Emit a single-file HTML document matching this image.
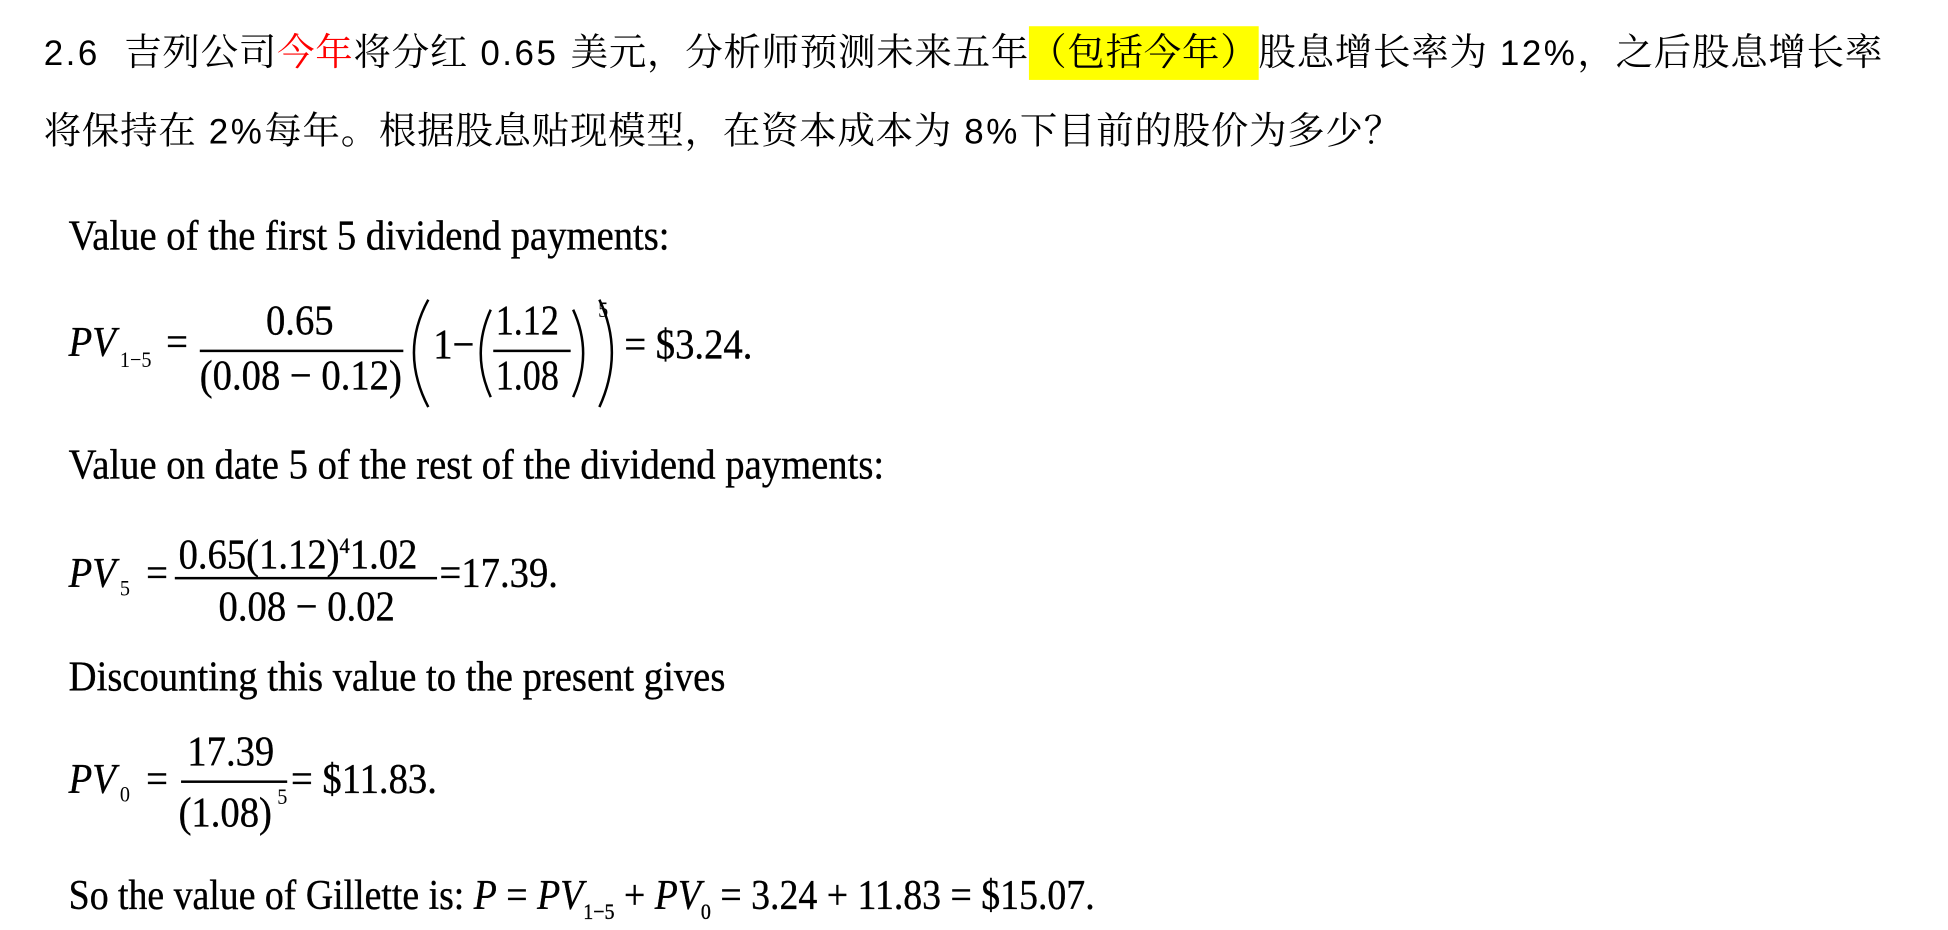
<!DOCTYPE html>
<html><head><meta charset="utf-8"><style>
html,body{margin:0;padding:0;background:#fff;}
body{width:1948px;height:928px;overflow:hidden;position:relative;}
#c{position:absolute;left:0;top:0;width:1560px;height:743px;transform:scale(1.2487);transform-origin:0 0;}
.cn{position:absolute;left:35px;font-family:"Liberation Sans","Noto Serif CJK SC",serif;font-size:30px;line-height:30px;white-space:nowrap;color:#000;letter-spacing:0.6px}
.cn b{font-weight:normal;letter-spacing:2px;font-size:28px}
.hl{background:#ffff00;padding:5px 0;}
.r{color:#f00}
.m{position:absolute;font-family:"Liberation Serif",serif;font-size:34px;line-height:30px;white-space:nowrap;transform-origin:0 50%;transform:scaleX(.91);color:#000;-webkit-text-stroke:0.3px #000}
.i{font-style:italic}
.s{position:absolute;font-family:"Liberation Serif",serif;font-size:18px;line-height:17px;white-space:nowrap;transform:scaleX(.9);transform-origin:0 50%}
.ln{position:absolute;height:1.8px;background:#000}
sub,sup{font-size:18px;}
</style></head><body><div id="c">
<div class="cn" style="top:28px"><b>2.6&nbsp;&nbsp;</b>吉列公司<span class="r">今年</span>将分红<b> 0.65 </b>美元，分析师预测未来五年<span class="hl">（包括今年）</span>股息增长率为<b> 12%</b>，之后股息增长率</div>
<div class="cn" style="top:91px">将保持在<b> 2%</b>每年。根据股息贴现模型，在资本成本为<b> 8%</b>下目前的股价为多少？</div>

<div class="m" style="left:55px;top:175px">Value of the first 5 dividend payments:</div>

<div class="m i" style="left:55px;top:260px">PV</div>
<div class="s" style="left:96px;top:280px">1−5</div>
<div class="m" style="left:133px;top:260px">=</div>
<div class="m" style="left:213px;top:243px">0.65</div>
<div class="ln" style="left:160px;top:280px;width:163px"></div>
<div class="m" style="left:160px;top:287px">(0.08 − 0.12)</div>
<div class="m" style="left:347px;top:262px">1−</div>
<div class="m" style="left:397px;top:243px;transform:scaleX(.85)">1.12</div>
<div class="ln" style="left:395px;top:280px;width:62px"></div>
<div class="m" style="left:397px;top:287px;transform:scaleX(.85)">1.08</div>
<div class="s" style="left:479px;top:240px">5</div>
<div class="m" style="left:500px;top:262px">= $3.24.</div>
<svg style="position:absolute;left:0;top:0" width="600" height="400" fill="none" stroke="#000" stroke-width="2">
<path d="M343 240 Q320 282 343 326"/><path d="M480 240 Q500 282 480 326"/>
<path d="M393 248 Q377 283 393 318"/><path d="M459 248 Q475 283 459 318"/>
</svg>

<div class="m" style="left:55px;top:358px">Value on date 5 of the rest of the dividend payments:</div>

<div class="m i" style="left:55px;top:445px">PV</div>
<div class="s" style="left:96px;top:463px">5</div>
<div class="m" style="left:117px;top:445px">=</div>
<div class="m" style="left:143px;top:422px">0.65(1.12)<sup>4</sup>1.02</div>
<div class="ln" style="left:140px;top:462px;width:210px"></div>
<div class="m" style="left:175px;top:472px">0.08 − 0.02</div>
<div class="m" style="left:352px;top:445px">=17.39.</div>

<div class="m" style="left:55px;top:528px">Discounting this value to the present gives</div>

<div class="m i" style="left:55px;top:610px">PV</div>
<div class="s" style="left:96px;top:628px">0</div>
<div class="m" style="left:117px;top:610px">=</div>
<div class="m" style="left:150px;top:588px">17.39</div>
<div class="ln" style="left:145px;top:625px;width:85px"></div>
<div class="m" style="left:143px;top:637px">(1.08)</div>
<div class="s" style="left:222px;top:630px">5</div>
<div class="m" style="left:233px;top:610px">= $11.83.</div>

<div class="m" style="left:55px;top:703px;transform:scaleX(.89)">So the value of Gillette is: <span class="i">P</span> = <span class="i">PV</span><sub>1−5</sub> + <span class="i">PV</span><sub>0</sub> = 3.24 + 11.83 = $15.07.</div>
</div></body></html>
